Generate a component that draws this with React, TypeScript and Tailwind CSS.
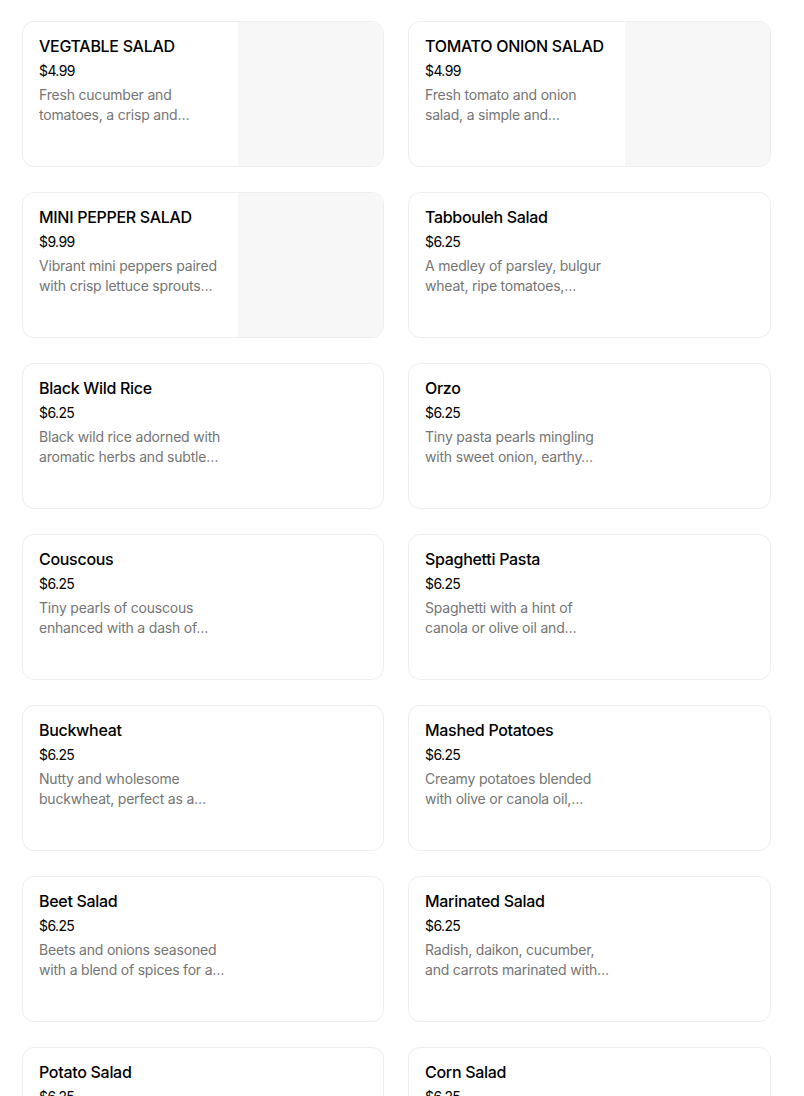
import React from 'react';

type Item = {
    name: string;
    price: string;
    description: string;
    image?: boolean;
};

// descriptions are already cut to what the card shows (two lines)
const items: Item[] = [
    { name: 'VEGTABLE SALAD', price: '$4.99', description: 'Fresh cucumber and tomatoes, a crisp and…', image: true },
    { name: 'TOMATO ONION SALAD', price: '$4.99', description: 'Fresh tomato and onion salad, a simple and…', image: true },
    { name: 'MINI PEPPER SALAD', price: '$9.99', description: 'Vibrant mini peppers paired with crisp lettuce sprouts…', image: true },
    { name: 'Tabbouleh Salad', price: '$6.25', description: 'A medley of parsley, bulgur wheat, ripe tomatoes,…' },
    { name: 'Black Wild Rice', price: '$6.25', description: 'Black wild rice adorned with aromatic herbs and subtle…' },
    { name: 'Orzo', price: '$6.25', description: 'Tiny pasta pearls mingling with sweet onion, earthy…' },
    { name: 'Couscous', price: '$6.25', description: 'Tiny pearls of couscous enhanced with a dash of…' },
    { name: 'Spaghetti Pasta', price: '$6.25', description: 'Spaghetti with a hint of canola or olive oil and…' },
    { name: 'Buckwheat', price: '$6.25', description: 'Nutty and wholesome buckwheat, perfect as a…' },
    { name: 'Mashed Potatoes', price: '$6.25', description: 'Creamy potatoes blended with olive or canola oil,…' },
    { name: 'Beet Salad', price: '$6.25', description: 'Beets and onions seasoned with a blend of spices for a…' },
    { name: 'Marinated Salad', price: '$6.25', description: 'Radish, daikon, cucumber, and carrots marinated with…' },
    { name: 'Potato Salad', price: '$6.25', description: 'Potatoes, pickles and onions tossed in a light…' },
    { name: 'Corn Salad', price: '$6.25', description: 'Sweet corn with peppers and herbs in a zesty…' },
];

const MenuCard: React.FC<{ item: Item }> = ({ item }) => (
    <div className="h-[146px] flex rounded-xl border border-[#eeeeee] bg-white overflow-hidden">
        <div className="flex-1 min-w-0 pl-4 pt-[14px] pr-3">
            <h3 className="text-[16px] leading-[20px] font-medium text-black tracking-[-0.3px]">{item.name}</h3>
            <p className="mt-[5px] text-[14px] leading-[20px] text-black tracking-[-0.6px]">{item.price}</p>
            <p className="mt-1 max-w-[186px] text-[14px] leading-[20px] text-[#757575] tracking-[-0.2px]">{item.description}</p>
        </div>
        {item.image && <div className="w-[145px] shrink-0 bg-[#f7f7f7]" />}
    </div>
);

export default function App() {
    return (
        <div className="min-h-screen bg-white font-['Inter',sans-serif]">
            <div className="grid grid-cols-[362px_363px] gap-x-[24px] gap-y-[25px] pl-[22px] pt-[21px]">
                {items.map(item => (
                    <MenuCard key={item.name} item={item} />
                ))}
            </div>
        </div>
    );
}
